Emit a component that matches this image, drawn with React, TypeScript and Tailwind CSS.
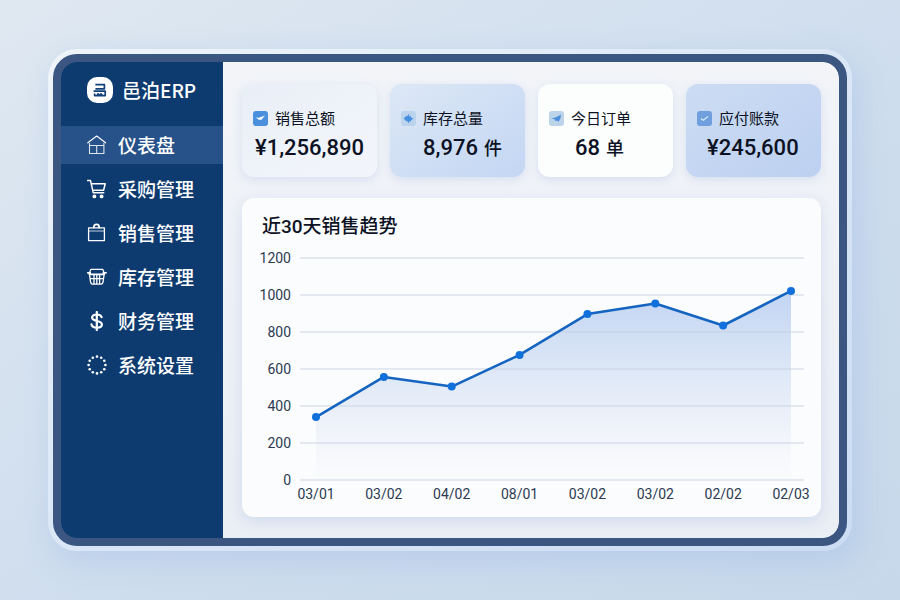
import type { ReactNode } from "react";

type IconProps = { children: ReactNode };

function NavIcon({ children }: IconProps) {
  return (
    <svg
      className="size-5 shrink-0"
      viewBox="0 0 20 20"
      fill="none"
      stroke="currentColor"
      strokeWidth="1.3"
      strokeLinecap="round"
      strokeLinejoin="round"
      aria-hidden="true"
    >
      {children}
    </svg>
  );
}

const DOTS = Array.from({ length: 12 }, (_, i) => {
  const angle = (i * Math.PI) / 6;
  return { cx: 10 + 8.4 * Math.sin(angle), cy: 10 - 8.4 * Math.cos(angle) };
});

const NAV_ITEMS = [
  {
    label: "仪表盘",
    active: true,
    icon: (
      <NavIcon>
        <g strokeWidth="1.1">
          <path d="M.8 7.8 9.7 1l8.9 6.8" />
          <path d="M2.5 8.4v10.1h14.4V8.4M2.5 10.5h14.4M9.7 10.5v8" strokeOpacity="0.85" />
        </g>
      </NavIcon>
    ),
  },
  {
    label: "采购管理",
    icon: (
      <NavIcon>
        <path d="M.6 1.6h2.9l2.8 12.2h10.4M4.2 4.8h14l-1.6 6.4H5.8" strokeWidth="1.5" />
        <circle cx="7.4" cy="17.4" r="1.3" fill="currentColor" />
        <circle cx="14.6" cy="17.4" r="1.3" fill="currentColor" />
      </NavIcon>
    ),
  },
  {
    label: "销售管理",
    icon: (
      <NavIcon>
        <path d="M1.6 4.9h15.8v12.7H1.6z" />
        <path d="M1.6 8h15.8" strokeOpacity="0.5" />
        <path d="M6.8 4.6C6.8 2.4 7.8 1.3 9.5 1.3s2.7 1.1 2.7 3.3" strokeWidth="1.8" />
      </NavIcon>
    ),
  },
  {
    label: "库存管理",
    icon: (
      <NavIcon>
        <path d="M2.4 6.2 3.8 2.4h12l1.4 3.8" />
        <path d="M.8 5.8h2.4M16.4 5.8h2.6M2.6 7.4h14.4" strokeWidth="1.8" />
        <path d="M2.4 7l1.2 8.2q.3 2 2 2h8.4q1.7 0 2-2L17.2 7M3.2 11.6h13.2M7 7.4v9.6M12.6 7.4v9.6M9.8 7.4v9.6" />
      </NavIcon>
    ),
  },
  {
    label: "财务管理",
    icon: (
      <NavIcon>
        <path
          d="M14.6 6.2C14 4.3 12.4 3.5 9.8 3.5c-2.9 0-4.7 1.2-4.7 3.1 0 4.8 9.8 1.9 9.8 6.9 0 2-2 3.1-5 3.1-2.9 0-4.9-1-5.4-3.2M9.8 1v18"
          strokeWidth="2.2"
        />
      </NavIcon>
    ),
  },
  {
    label: "系统设置",
    icon: (
      <NavIcon>
        {DOTS.map((dot, i) => (
          <circle key={i} cx={dot.cx} cy={dot.cy} r="1.3" fill="currentColor" stroke="none" />
        ))}
      </NavIcon>
    ),
  },
];

const STATS = [
  {
    label: "销售总额",
    value: "¥1,256,890",
    card: "bg-linear-to-br from-[#e9eff7] to-[#f3f5fb]",
    badge: "bg-[#4a90dc] text-white",
    indent: "pl-[2px]",
    mark: <path d="M3 6.4l3 .4 6-2.2-3.6 4.2H5.6L3 6.4z" />,
  },
  {
    label: "库存总量",
    value: "8,976",
    unit: "件",
    card: "bg-linear-to-br from-[#dde8f6] to-[#c3d6f3]",
    badge: "bg-[#bcd3ee] text-[#4690e0]",
    indent: "pl-[22px]",
    mark: <path d="M2.6 7.6l3.2-3.2v1.4L8 2.8v2.6l1.4-.6.8 1.6 2.2 1.2-2.2 1.6-.8 1.6-1.4-.6v2.4L5.8 9.6v1.2z" />,
  },
  {
    label: "今日订单",
    value: "68",
    unit: "单",
    card: "bg-[#fcfdfd]",
    badge: "bg-[#bcd4ea] text-[#4a90dc]",
    indent: "pl-[26px]",
    mark: <path d="M2.6 7.6l5-1.6 4.4-2.4-.6 4-1.8 3.2-2-1.4-1.2.8-.4-1.8z" />,
  },
  {
    label: "应付账款",
    value: "¥245,600",
    card: "bg-linear-to-br from-[#ccdcf3] to-[#bcd0f0]",
    badge: "bg-[#6f9fdc] text-[#d5ecf8]",
    indent: "pl-[10px]",
    mark: (
      <path d="M4 7.6l2.2 1.6L11 5.6" fill="none" stroke="currentColor" strokeWidth="1.2" />
    ),
  },
];

const SALES = [
  { date: "03/01", amount: 340 },
  { date: "03/02", amount: 557 },
  { date: "04/02", amount: 505 },
  { date: "08/01", amount: 676 },
  { date: "03/02", amount: 897 },
  { date: "03/02", amount: 954 },
  { date: "02/02", amount: 835 },
  { date: "02/03", amount: 1022 },
];

const TICKS = [1200, 1000, 800, 600, 400, 200, 0];
const BASELINE = 232;

const toX = (index: number) => 60 + (index * 475) / 7;
const toY = (amount: number) => BASELINE - (amount * 37) / 200;

function SalesChart() {
  const line = SALES.map((s, i) => `${toX(i)},${toY(s.amount)}`).join(" ");

  return (
    <svg
      className="mt-[9px] block h-auto w-full font-[family-name:Roboto,'Noto_Sans',sans-serif]"
      viewBox="0 0 555 256"
      role="img"
      aria-label="近30天销售趋势"
    >
      <defs>
        <linearGradient id="salesArea" x1="0" y1="0" x2="0" y2="1">
          <stop offset="0" stopColor="#bcd0f2" stopOpacity="0.9" />
          <stop offset="0.4" stopColor="#d6e3f5" stopOpacity="0.85" />
          <stop offset="0.7" stopColor="#e9eef8" stopOpacity="0.75" />
          <stop offset="1" stopColor="#f8f9fc" stopOpacity="0.4" />
        </linearGradient>
      </defs>

      <polygon
        points={`${toX(0)},${BASELINE} ${line} ${toX(SALES.length - 1)},${BASELINE}`}
        fill="url(#salesArea)"
      />

      {TICKS.map((tick) => (
        <g key={tick}>
          <line x1="44" x2="548" y1={toY(tick)} y2={toY(tick)} stroke="#c6d0e2" strokeOpacity="0.9" />
          <text x="35" y={toY(tick) + 5} textAnchor="end" fontSize="14" fill="#2c3a52">
            {tick}
          </text>
        </g>
      ))}

      <polyline points={line} fill="none" stroke="#1464c0" strokeWidth="2.6" strokeLinejoin="round" />

      {SALES.map((s, i) => (
        <g key={i}>
          <circle cx={toX(i)} cy={toY(s.amount)} r="4" fill="#1170dc" />
          <text x={toX(i)} y="251" textAnchor="middle" fontSize="14" fill="#2c3a52">
            {s.date}
          </text>
        </g>
      ))}
    </svg>
  );
}

function Sidebar() {
  return (
    <aside className="w-[162px] shrink-0 bg-[#0d3b70] pt-[15px] text-white">
      <div className="flex items-center gap-[9px] pl-[26px]">
        <svg className="size-[26px] shrink-0" viewBox="0 0 26 26" aria-hidden="true">
          <rect width="26" height="26" rx="10" fill="#fff" />
          <g fill="none" stroke="#12407a" strokeWidth="1.7" strokeLinejoin="round">
            <path d="M8.4 7.6h9v4.2h-9" />
            <path d="M6.6 14.2h11.6v4.4H7.6v-2M10 18.6l1-1.8 1.6 1.8 1.4-1.8 1.4 1.8" />
          </g>
        </svg>
        <span className="text-[19px] leading-[26px] font-medium whitespace-nowrap">邑泊ERP</span>
      </div>

      <nav className="mt-[23px] flex flex-col gap-[6px]">
        {NAV_ITEMS.map((item) => (
          <a
            key={item.label}
            href="#"
            aria-current={item.active ? "page" : undefined}
            className={`flex h-[38px] items-center gap-[11px] pl-[26px] text-[19px] font-medium whitespace-nowrap ${
              item.active ? "bg-[#265189]" : ""
            }`}
          >
            {item.icon}
            {item.label}
          </a>
        ))}
      </nav>
    </aside>
  );
}

export default function App() {
  return (
    <div className="flex min-h-screen items-center bg-linear-to-br from-[#dfe8f1] via-[#d0deee] to-[#c6d8ea] px-[48px] py-6 font-[family-name:'Noto_Sans_CJK_SC',sans-serif]">
      <div className="w-full rounded-[29px] bg-linear-to-br from-[#eff4fa] via-[#dbe7f6] to-[#cbdcf3] p-[5px] shadow-[6px_10px_28px_2px_rgba(165,190,232,0.45)]">
        <div className="flex overflow-hidden rounded-[24px] border-8 border-[#3b5680] bg-[#3b5680]">
          <div className="flex min-w-0 flex-1 overflow-hidden rounded-[16px]">
            <Sidebar />

            <main className="min-w-0 flex-1 bg-linear-to-b from-[#f2f4f8] to-[#eaeef5] pt-[22px] pr-[18px] pb-[21px] pl-[19px]">
              <section className="grid grid-cols-4 gap-[13px]">
                {STATS.map((stat) => (
                  <article
                    key={stat.label}
                    className={`rounded-[12px] pt-6 pb-[14px] pl-[11px] whitespace-nowrap text-[#0c1224] shadow-[0_3px_10px_rgba(170,190,228,0.35)] ${stat.card}`}
                  >
                    <h2 className="flex items-center gap-[7px] text-[15px] leading-5 font-normal">
                      <svg
                        className={`size-[15px] shrink-0 rounded-[3px] ${stat.badge}`}
                        viewBox="0 0 15 15"
                        fill="currentColor"
                        aria-hidden="true"
                      >
                        {stat.mark}
                      </svg>
                      {stat.label}
                    </h2>
                    <p
                      className={`mt-[5px] font-[family-name:Roboto,'Noto_Sans_CJK_SC',sans-serif] text-[22px] leading-[30px] font-medium ${stat.indent}`}
                    >
                      {stat.value}
                      {stat.unit && <span className="ml-[6px] text-[18px] leading-none">{stat.unit}</span>}
                    </p>
                  </article>
                ))}
              </section>

              <section className="mt-[21px] rounded-[12px] bg-[#fbfcfd] pt-[17px] pr-[10px] pb-[13px] pl-[14px] shadow-[0_4px_14px_rgba(170,190,228,0.4)]">
                <h2 className="pl-[6px] font-[family-name:Roboto,'Noto_Sans_CJK_SC',sans-serif] text-[19px] leading-6 font-medium text-[#0c1224]">
                  近30天销售趋势
                </h2>
                <SalesChart />
              </section>
            </main>
          </div>
        </div>
      </div>
    </div>
  );
}
